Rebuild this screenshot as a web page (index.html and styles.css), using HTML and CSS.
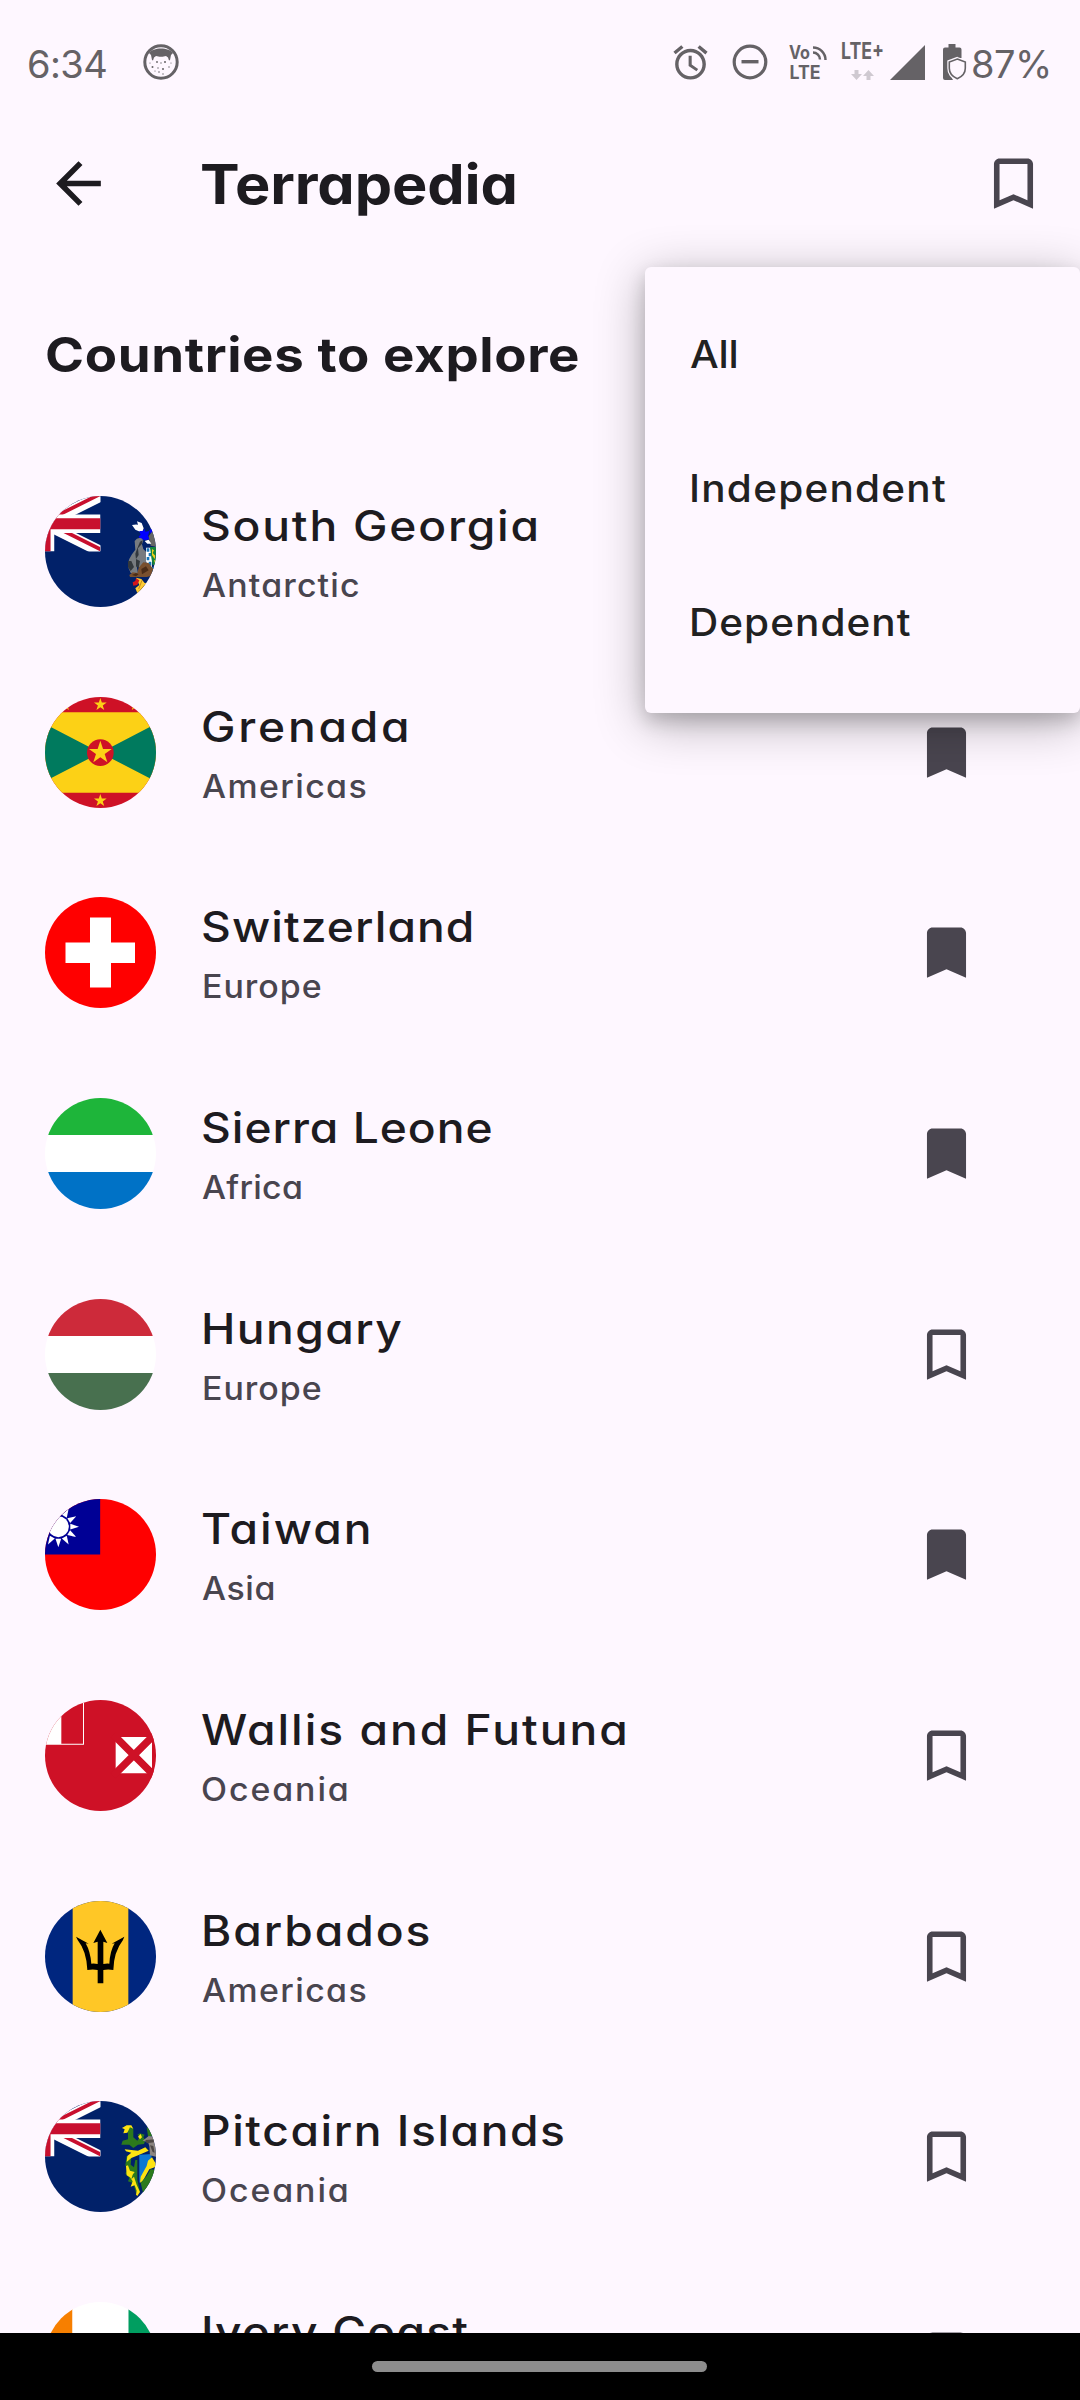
FILE: index.html
```html
<!DOCTYPE html>
<html lang="en">
<head>
<meta charset="utf-8">
<title>Terrapedia</title>
<link rel="stylesheet" href="styles.css">
</head>
<body>
<svg class="defs" aria-hidden="true">
  <symbol id="bookmark" viewBox="0 0 24 24"><path d="M17 3H7c-1.100 0-2 .9-2 2v16l7-3 7 3V5c0-1.100-.9-2-2-2z"/></symbol>
  <symbol id="bookmark-outline" viewBox="0 0 24 24"><path d="M17 3H7c-1.100 0-2 .9-2 2v16l7-3 7 3V5c0-1.100-.9-2-2-2zm0 15-5-2.180L7 18V5h10v13z"/></symbol>
  <symbol id="star" viewBox="-10 -10 20 20"><path d="M0-10 2.250-3.090 9.510-3.090 3.630 1.180 5.880 8.090 0 3.820-5.880 8.090-3.630 1.180-9.510-3.090-2.250-3.090z"/></symbol>
  <clipPath id="jack-clip"><path d="M30 15h30v15zM30 15v15H0zM30 15H0V0zM30 15V0h30z"/></clipPath>
  <symbol id="blue-ensign" viewBox="0 0 111 111">
    <rect width="111" height="111" fill="#012169"/>
    <svg x="-55.500" y="0" width="111" height="55.500" viewBox="0 0 60 30">
      <path d="M0 0l60 30M60 0 0 30" stroke="#fff" stroke-width="6"/>
      <path d="M0 0l60 30M60 0 0 30" stroke="#c8102e" stroke-width="4" clip-path="url(#jack-clip)"/>
      <path d="M30 0v30M0 15h60" stroke="#fff" stroke-width="10"/>
      <path d="M30 0v30M0 15h60" stroke="#c8102e" stroke-width="6"/>
    </svg>
  </symbol>
</svg>

<div class="screen">
  <header class="status">
    <span class="clock">6:34</span>
    <svg class="cat" viewBox="0 0 36 36">
      <circle cx="18" cy="18" r="16.200" fill="none" stroke="#656266" stroke-width="3"/>
      <path fill="#656266" d="M6 9C10 3 26 3 30 9l-2 2-1 5-1 .5-1-3-2-1.500-3.500.8h-3l-3.500-.8-2 1.500-1 3-1-.5-1-5z"/>
      <g fill="#656266"><circle cx="14" cy="18" r=".9"/><circle cx="22" cy="18" r="1"/><circle cx="18" cy="19" r=".7"/><circle cx="9.500" cy="23" r="1"/><circle cx="15" cy="24" r=".7"/><circle cx="20" cy="25" r="1"/><circle cx="26" cy="23" r=".7"/><circle cx="16" cy="28" r=".8"/><circle cx="20" cy="30" r=".7"/><circle cx="12" cy="27" r=".6"/><circle cx="28" cy="19" r=".6"/><circle cx="7" cy="19" r=".6"/></g>
    </svg>
    <div class="indicators">
      <svg class="alarm" viewBox="0 0 24 24"><path d="M22 5.720l-4.600-3.860-1.290 1.530 4.600 3.860L22 5.720zM7.880 3.390L6.600 1.860 2 5.710l1.290 1.530 4.590-3.850zM12.700 8H10.900v6l4.600 3.150.95-1.400-3.750-2.600V8zM12 4c-4.970 0-9 4.030-9 9s4.020 9 9 9c4.970 0 9-4.030 9-9s-4.030-9-9-9zm0 16c-3.870 0-7-3.130-7-7s3.130-7 7-7 7 3.130 7 7-3.130 7-7 7z"/></svg>
      <svg class="dnd" viewBox="0 0 36 36"><circle cx="18" cy="18" r="15.800" fill="none" stroke="#656266" stroke-width="3.200"/><path d="M9.500 16h17v3.400h-17z"/></svg>
      <svg class="volte" viewBox="0 0 38 36">
        <text x="0" y="14.500" textLength="21" lengthAdjust="spacingAndGlyphs">Vo</text>
        <text x=".5" y="34.500" textLength="31" lengthAdjust="spacingAndGlyphs">LTE</text>
        <path fill="none" stroke="#656266" stroke-width="2.500" d="M24 8.500a7 7 0 0 1 7 7M24 3.500A12.500 12.500 0 0 1 36.500 16"/>
      </svg>
      <svg class="lte" viewBox="0 0 44 40">
        <text x="0" y="16.500" textLength="43" lengthAdjust="spacingAndGlyphs">LTE+</text>
        <path fill="#cfc9d1" d="M13.500 28h4v4h3.500l-5.500 6-5.500-6h3.500zM25.500 38h4v-4h3.500l-5.500-6-5.500 6h3.500z"/>
      </svg>
      <svg class="signal" viewBox="0 0 35 35"><path d="M35 0v35H0z"/></svg>
      <svg class="battery" viewBox="0 0 24 36">
        <path d="M5.500 0h7v3.500h4q2 0 2 2V14L5 17v10l5 9H2q-2 0-2-2V5.500q0-2 2-2h3.500z"/>
        <path fill="#fef7ff" stroke="#fef7ff" stroke-width="4" d="M14.300 15l8 3v6.300c0 5-3.200 8.400-8 10.400-4.800-2-8-5.400-8-10.400V18z"/>
        <path fill="#fef7ff" stroke="#656266" stroke-width="1.600" d="M14.300 15l8 3v6.300c0 5-3.200 8.400-8 10.400-4.800-2-8-5.400-8-10.400V18z"/>
      </svg>
      <span class="percent">87%</span>
    </div>
  </header>

  <header class="appbar">
    <svg class="icon back" viewBox="0 0 24 24"><path d="M20 11H7.830l5.590-5.590L12 4l-8 8 8 8 1.410-1.410L7.830 13H20v-2z"/></svg>
    <h1 class="title">Terrapedia</h1>
    <svg class="icon"><use href="#bookmark-outline"/></svg>
  </header>

  <main class="content">
    <h2 class="heading">Countries to explore</h2>
    <ul class="list">
      <li class="row">
        <svg class="flag" viewBox="0 0 111 111">
          <use href="#blue-ensign" width="111" height="111"/>
          <g transform="scale(.3333) translate(-45 -47)">
            <path fill="#fff" d="M306 134q12-3 18-1l-3-10 14 5 6 16-3 8-8 2-14-6z"/>
            <path fill="#00f" d="M328 152l10 0 6-6 2 8 12-2-4 16 6 8-14 4-16-4-4-8 6-4zM358 150l8-6 2 12-6 4z"/>
            <path fill="#666" d="M356 168l10-14 14-24v70l-18-4z"/>
            <path fill="#fff" d="M344 182l12-4 8 12-12 0z"/>
            <path fill="#777b80" d="M314 182q8-12 20-8l6 6-4 12 4 14 8 8v32l-14 16-14-4 4 20h-22l-6-14-2-14q2-14 12-28l10-14z"/>
            <path fill="#33383d" d="M330 184l8-4-2 10-12 14 2 20-8 12-2-16 6-16zM294 242h10l8 18-10 12-8-12zM318 236l12 6-4 22-8-6z"/>
            <path fill="#fff" d="M348 202l12 0 6 10v60l-12-10-6-20z"/>
            <path fill="#1674b8" d="M350 204h8v10h-8zM356 218h8v10h-8zM350 230h8v10h-8zM356 244h8v12h-8zM366 260h8v16h-8z"/>
            <path fill="#16863a" d="M360 200h20v54h-12l-4-22z"/>
            <path fill="#f2cf1b" d="M366 206l6 4-4 8 8 8-2 10-8-12zM372 240l6 0-2 12z"/>
            <path fill="#79502f" d="M326 262l14-16 16 2 14 18 6 18-26 6-50 0-2-6 10-8 14 2z"/>
            <path fill="#4a2c18" d="M334 266l14-8 8 12-20 12zM306 284l12-6 8 4-8 6z"/>
            <path fill="#fc3" d="M318 292l16 4 10 12 18 0-6 18-34 12-6-14 12-10z"/>
            <path fill="#d4151b" d="M318 294l10 6-6 14-12 2-2-10 8-4z"/>
            <path fill="none" stroke="#a76b10" stroke-width="2" d="M336 300l-10 26M346 312l-16 18"/>
          </g>
        </svg>
        <div class="text"><span class="name south-georgia">South Georgia</span><span class="region antarctic">Antarctic</span></div>
      </li>
      <li class="row">
        <svg class="flag" viewBox="45 47 333 333">
          <path fill="#ce1126" d="M45 47h333v333H45z"/>
          <path fill="#fcd116" d="M45 93h333v241H45z"/>
          <path fill="#007a5e" d="M20 115l191 99-191 99zM402 115l-191 99 191 99z"/>
          <circle cx="211" cy="214" r="40" fill="#ce1126"/>
          <g fill="#fcd116"><use href="#star" x="175" y="178" width="72" height="72"/><use href="#star" x="191" y="50" width="40" height="40"/><use href="#star" x="191" y="338" width="40" height="40"/><use href="#star" x="85" y="50" width="40" height="40"/><use href="#star" x="297" y="50" width="40" height="40"/></g>
        </svg>
        <div class="text"><span class="name grenada">Grenada</span><span class="region americas">Americas</span></div>
        <svg class="icon mark"><use href="#bookmark"/></svg>
      </li>
      <li class="row">
        <svg class="flag" viewBox="0 0 111 111"><path fill="red" d="M0 0h111v111H0z"/><path fill="#fff" d="M45 20.500h21v25h24v20.500H66v24.500H45V66H20.500V45.500H45z"/></svg>
        <div class="text"><span class="name switzerland">Switzerland</span><span class="region europe">Europe</span></div>
        <svg class="icon mark"><use href="#bookmark"/></svg>
      </li>
      <li class="row">
        <svg class="flag" viewBox="0 0 111 111"><path fill="#1eb53a" d="M0 0h111v37H0z"/><path fill="#fff" d="M0 37h111v37H0z"/><path fill="#0072c6" d="M0 74h111v37H0z"/></svg>
        <div class="text"><span class="name sierra-leone">Sierra Leone</span><span class="region africa">Africa</span></div>
        <svg class="icon mark"><use href="#bookmark"/></svg>
      </li>
      <li class="row">
        <svg class="flag" viewBox="0 0 111 111"><path fill="#cd2a3a" d="M0 0h111v37H0z"/><path fill="#fff" d="M0 37h111v37H0z"/><path fill="#48704f" d="M0 74h111v37H0z"/></svg>
        <div class="text"><span class="name hungary">Hungary</span><span class="region europe">Europe</span></div>
        <svg class="icon mark"><use href="#bookmark-outline"/></svg>
      </li>
      <li class="row">
        <svg class="flag" viewBox="45 56 333 333">
          <path fill="red" d="M45 56h333v333H45z"/><path fill="#000095" d="M45 56h165.500v166.500H45z"/>
          <g transform="translate(85 139)" fill="#fff">
            <circle r="31.500"/>
            <path id="ray" d="M36-8.500 62 0 36 8.500z"/>
            <use href="#ray" transform="rotate(30)"/><use href="#ray" transform="rotate(60)"/><use href="#ray" transform="rotate(90)"/><use href="#ray" transform="rotate(120)"/><use href="#ray" transform="rotate(-30)"/><use href="#ray" transform="rotate(-60)"/>
          </g>
        </svg>
        <div class="text"><span class="name taiwan">Taiwan</span><span class="region asia">Asia</span></div>
        <svg class="icon mark"><use href="#bookmark"/></svg>
      </li>
      <li class="row">
        <svg class="flag" viewBox="45 60 333 333">
          <path fill="#ce1126" d="M45 60h333v333H45z"/>
          <path fill="#fff" d="M45 60h49v131h65V60h3v134H45z"/>
          <path fill="#fff" d="M257 171h109v109H257z"/>
          <path stroke="#ce1126" stroke-width="22" d="M250 164l123 123M373 164 250 287"/>
        </svg>
        <div class="text"><span class="name wallis">Wallis and Futuna</span><span class="region oceania">Oceania</span></div>
        <svg class="icon mark"><use href="#bookmark-outline"/></svg>
      </li>
      <li class="row">
        <svg class="flag" viewBox="45 663 333 333">
          <path fill="#00267f" d="M45 663h333v333H45z"/><path fill="#ffc726" d="M128 663h167v333H128z"/>
          <path d="M211 749l21 40-12-4v67q10-2 18-1 2-38 16-61l-9 1 38-21-4 10q-28 36-29 90-16-3-30 0v40h-17v-40q-14-3-31 0-2-56-29-90l-5-10 38 21-9-1q14 24 17 61 9-1 19 1v-67l-13 4z"/>
        </svg>
        <div class="text"><span class="name barbados">Barbados</span><span class="region americas">Americas</span></div>
        <svg class="icon mark"><use href="#bookmark-outline"/></svg>
      </li>
      <li class="row">
        <svg class="flag" viewBox="0 0 111 111">
          <use href="#blue-ensign" width="111" height="111"/>
          <g transform="scale(.3333) translate(-45 -63)">
            <path fill="#2c7a1c" d="M294 148l8-10 8 8 0 26 12 10 8-12-8-6 8-4 14 4-4 8 6 8-4 12-18 2-14 10-12-10-24 0 4-12 16-4z"/>
            <path fill="#2c7a1c" d="M290 228l14 6-2 20 10 8 4-22 6 0 0 60 8 36-12 2-8-28-16-6 4-10-12-14 8-10-8-14z"/>
            <path fill="#fde311" d="M276 144l14-8h14l6 10-10-4-8 16-12 2 4-12zM324 170l8-8 4 10-6 6zM284 208l20 2 20 2 22-10 10 10-28 12-24 10-14 12 2-18 12-10-16-4zM288 258l6-2 6 16 14 4-6 8-4 14 8-8 8 24 10 22-8 12-4-4 2-12-6-16-12 4 6-16-8-12-10-6z"/>
            <path fill="#0c77d4" d="M328 224l38-2-4 20-34 68z"/>
            <path fill="#fde311" d="M354 242l12-10 12 20-4 10-16 6-20 36-8 4 2-18 18-32z"/>
            <path fill="#2c7a1c" d="M378 270v50l-38 22-8-34 18-20 12-20z"/>
            <path fill="#8c8580" d="M338 182l18-14 22 2v60l-18-4-2-28-4-12z"/>
            <path fill="#4d4745" d="M346 180l32-2v8l-28 4zM360 196l10 2 4 20-6-2z"/>
            <path fill="#2c7a1c" d="M350 142l12 8 4 18-12 0z"/>
          </g>
        </svg>
        <div class="text"><span class="name pitcairn">Pitcairn Islands</span><span class="region oceania">Oceania</span></div>
        <svg class="icon mark"><use href="#bookmark-outline"/></svg>
      </li>
      <li class="row">
        <svg class="flag" viewBox="0 0 111 111"><path fill="#f77f00" d="M0 0h27.500v111H0z"/><path fill="#fff" d="M27.500 0h56v111h-56z"/><path fill="#009e60" d="M83.500 0H111v111H83.500z"/></svg>
        <div class="text"><span class="name ivory-coast">Ivory Coast</span></div>
        <svg class="icon mark"><use href="#bookmark-outline"/></svg>
      </li>
    </ul>
  </main>

  <footer class="navbar"><div class="pill"></div></footer>

  <div class="menu">
    <div class="option all">All</div>
    <div class="option">Independent</div>
    <div class="option dependent">Dependent</div>
  </div>
</div>
</body>
</html>
```
FILE: styles.css
```css
* { box-sizing: border-box; margin: 0; padding: 0; }

body {
  width: 1080px;
  height: 2400px;
  overflow: hidden;
  background: #fef7ff;
  color: #1d1b20;
  font-family: Inter, "Noto Sans", sans-serif;
  font-feature-settings: "cv11";
}

svg { display: block; flex: none; }
.defs { position: absolute; width: 0; height: 0; }

.screen {
  position: relative;
  display: flex;
  flex-direction: column;
  width: 1080px;
  height: 2400px;
  overflow: hidden;
}

.status {
  display: flex;
  align-items: center;
  height: 124px;
  padding: 0 31px 0 27px;
  color: #656266;
  fill: #656266;
  font-size: 38px;
}
.clock { width: 115.500px; padding-top: 3px; letter-spacing: -0.6px; }
.cat { width: 36px; height: 36px; }
.indicators { display: flex; align-items: center; margin-left: auto; }
.indicators svg { overflow: visible; }
.indicators text { font-size: 18.500px; font-weight: 700; }
.alarm { width: 41px; height: 41px; margin-right: 21px; }
.dnd { width: 36px; height: 36px; margin-right: 21.500px; }
.volte { width: 38px; height: 36px; margin-right: 14px; }
.lte { width: 44px; height: 40px; margin-right: 5px; }
.indicators .lte text { font-size: 22.500px; }
.signal { width: 35px; height: 35px; margin-right: 18px; }
.battery { width: 24px; height: 36px; margin-right: 4px; }
.percent { width: 78px; padding-top: 3px; letter-spacing: -0.5px; }

.appbar {
  display: flex;
  align-items: center;
  height: 119px;
  padding: 0 33.500px 0 44.500px;
}
.icon { width: 67px; height: 67px; fill: #49454f; }
.back { fill: #1d1b20; }

.title, .heading, .name, .region, .option { transform-origin: 0 50%; white-space: nowrap; }

.title {
  flex: 1;
  margin-left: 88.500px;
  font-size: 55px;
  font-weight: 700;
  line-height: 72px;
  letter-spacing: -0.1px;
  transform: scaleX(1.08);
}

.content { flex: 1; min-height: 0; overflow: hidden; }
.heading {
  height: 208px;
  margin-left: 45px;
  padding-top: 82px;
  font-size: 48px;
  font-weight: 700;
  line-height: 60px;
  letter-spacing: 0.570px;
  transform: scaleX(1.1);
}

.list { list-style: none; }
.row {
  display: flex;
  align-items: center;
  height: 200.700px;
  padding: 0 100.500px 0 45px;
}
.flag { width: 111px; height: 111px; border-radius: 50%; overflow: hidden; }
.text { display: flex; flex-direction: column; flex: 1; height: 119px; margin: 4px 0 0 45px; }
.name { font-size: 42px; font-weight: 500; line-height: 64px; transform: scaleX(1.1); }
.region { padding-left: 1px; color: #49454f; font-size: 32px; font-weight: 500; line-height: 55px; transform: scaleX(1.06); }

/* Tracking per label */
.south-georgia { letter-spacing: 1.610px; }
.grenada { letter-spacing: 2.500px; }
.switzerland { letter-spacing: 0.960px; }
.sierra-leone { letter-spacing: 0.870px; }
.hungary { letter-spacing: 1.300px; }
.taiwan { letter-spacing: 1.820px; }
.wallis { letter-spacing: 1.790px; }
.barbados { letter-spacing: 1.760px; }
.pitcairn { letter-spacing: 1.400px; }
.ivory-coast { letter-spacing: 1.100px; }
.antarctic { letter-spacing: 1.080px; }
.americas { letter-spacing: 1.300px; }
.europe { letter-spacing: 0.920px; }
.africa { letter-spacing: 0.260px; }
.asia { letter-spacing: 0.530px; }
.oceania { padding-left: 0; letter-spacing: 1.800px; }

.navbar {
  display: flex;
  align-items: center;
  justify-content: center;
  height: 67px;
  padding-right: 1px;
  background: #000;
}
.pill { width: 335px; height: 11px; border-radius: 6px; background: #8d8d8d; }

.menu {
  position: absolute;
  top: 267px;
  right: 0;
  width: 435px;
  height: 446px;
  padding: 22px 0 22px 44px;
  overflow: visible;
  border-radius: 6px;
  background: #fef7ff;
  box-shadow: 0 10px 50px rgba(0, 0, 0, .3), 0 8px 18px rgba(0, 0, 0, .17);
  color: #212121;
}
.option {
  width: 300px;
  height: 134px;
  font-size: 37.500px;
  font-weight: 500;
  line-height: 131px;
  letter-spacing: 1.140px;
  transform: scaleX(1.08);
}
.dependent { letter-spacing: 0.960px; }
.all { padding-left: 1px; letter-spacing: -0.2px; }
```
